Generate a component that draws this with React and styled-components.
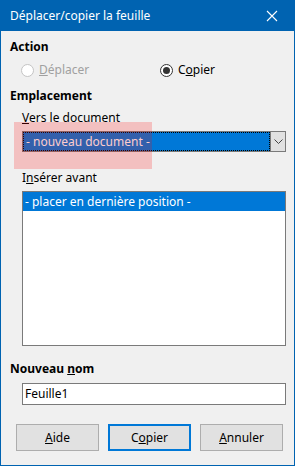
import React from 'react'
import styled, { createGlobalStyle } from 'styled-components'

const Global = createGlobalStyle`
  html, body { margin: 0; padding: 0; background: #f0f0f0; }
  * { box-sizing: border-box; }
`

const WIN_BLUE = '#0063b1'
const SEL_BLUE = '#0078d7'

function App() {
  return (
    <>
      <Global />
      <Window>
        <TitleBar>
          <Title>Déplacer/copier la feuille</Title>
          <Close>
            <svg width="12" height="12" viewBox="0 0 12 12">
              <path d="M1 1 L11 11 M11 1 L1 11" stroke="#fff" strokeWidth="1.1" />
            </svg>
          </Close>
        </TitleBar>
        <Body>
          <Heading>Action</Heading>
          <RadioRow>
            <RadioItem disabled>
              <Radio disabled />
              <span><u>D</u>éplacer</span>
            </RadioItem>
            <RadioItem>
              <Radio checked />
              <span>C<u>o</u>pier</span>
            </RadioItem>
          </RadioRow>

          <Heading top={10}>Emplacement</Heading>
          <Group>
            <Label><u>V</u>ers le document</Label>
            <Combo>
              <ComboValue>
                <ComboText>- nouveau document -</ComboText>
              </ComboValue>
              <ComboButton>
                <svg width="9" height="6" viewBox="0 0 9 6">
                  <path d="M0.5 0.5 L4.5 4.5 L8.5 0.5" fill="none" stroke="#444" strokeWidth="1" />
                </svg>
              </ComboButton>
            </Combo>
            <Highlight />
            <Label top={18}>I<u>n</u>sérer avant</Label>
            <ListBox>
              <ListItem selected>- placer en dernière position -</ListItem>
            </ListBox>
          </Group>

          <Heading top={15}>Nouveau <u>n</u>om</Heading>
          <Group>
            <TextInput>Feuille1</TextInput>
          </Group>

          <Buttons>
            <Button><u>A</u>ide</Button>
            <Button focused>C<u>o</u>pier</Button>
            <Button><u>A</u>nnuler</Button>
          </Buttons>
        </Body>
      </Window>
    </>
  )
}

export default App

const Window = styled.div`
width: 295px;
height: 466px;
display: flex;
flex-direction: column;
background: #f0f0f0;
border: 1px solid ${WIN_BLUE};
border-top: none;
font-family: "Noto Sans", "Open Sans", sans-serif;
font-size: 12px;
color: #000;
`

const TitleBar = styled.div`
height: 31px;
flex: none;
display: flex;
align-items: center;
justify-content: space-between;
background: ${WIN_BLUE};
margin: 0 -1px;
padding: 0 17px 0 10px;
`

const Title = styled.div`
color: #fff;
font-size: 12px;
`

const Close = styled.div`
display: flex;
align-items: center;
`

const Body = styled.div`
display: flex;
flex-direction: column;
padding: 8px 8px 0 9px;
`

const Heading = styled.div`
font-weight: bold;
line-height: 16px;
margin-top: ${p => p.top || 0}px;
`

const RadioRow = styled.div`
display: grid;
grid-template-columns: 139px 1fr;
padding: 7px 0 0 11px;
`

const RadioItem = styled.label`
display: flex;
align-items: center;
gap: 5px;
line-height: 16px;
color: ${p => p.disabled ? '#a0a0a0' : '#000'};
`

const Radio = styled.span`
width: 13px;
height: 13px;
border-radius: 50%;
border: 1px solid ${p => p.disabled ? '#c4c4c4' : '#333'};
background: #fff;
display: flex;
align-items: center;
justify-content: center;
&::after {
  content: '';
  width: 7px;
  height: 7px;
  border-radius: 50%;
  background: ${p => p.checked ? '#333' : 'transparent'};
}
`

const Group = styled.div`
position: relative;
display: flex;
flex-direction: column;
padding: 6px 0 0 12px;
`

const Label = styled.div`
line-height: 16px;
margin-top: ${p => p.top || 0}px;
`

const Combo = styled.div`
margin-top: 5px;
height: 21px;
display: flex;
border: 1px solid #7a7a7a;
background: #fff;
`

const ComboValue = styled.div`
flex: 1;
background: ${SEL_BLUE};
border: 1px dotted #000;
display: flex;
align-items: center;
`

const ComboText = styled.span`
color: #fff;
padding-left: 2px;
`

const ComboButton = styled.div`
width: 15px;
background: #e1e1e1;
border-left: 1px solid #7a7a7a;
display: flex;
align-items: center;
justify-content: center;
`

const Highlight = styled.div`
position: absolute;
left: 4px;
top: 18px;
width: 138px;
height: 47px;
background: rgba(255, 0, 0, 0.2);
pointer-events: none;
`

const ListBox = styled.div`
margin-top: 5px;
height: 155px;
border: 1px solid #7a7a7a;
background: #fff;
`

const ListItem = styled.div`
height: 19px;
line-height: 19px;
padding-left: 2px;
color: ${p => p.selected ? '#fff' : '#000'};
background: ${p => p.selected ? SEL_BLUE : 'transparent'};
`

const TextInput = styled.div`
height: 22px;
border: 1px solid #7a7a7a;
background: #fff;
line-height: 20px;
padding-left: 2px;
`

const Buttons = styled.div`
display: flex;
gap: 9px;
padding: 19px 0 0 6px;
`

const Button = styled.div`
width: 83px;
height: 27px;
display: flex;
align-items: center;
justify-content: center;
background: #e1e1e1;
border: ${p => p.focused ? `2px solid ${SEL_BLUE}` : '1px solid #adadad'};
`
